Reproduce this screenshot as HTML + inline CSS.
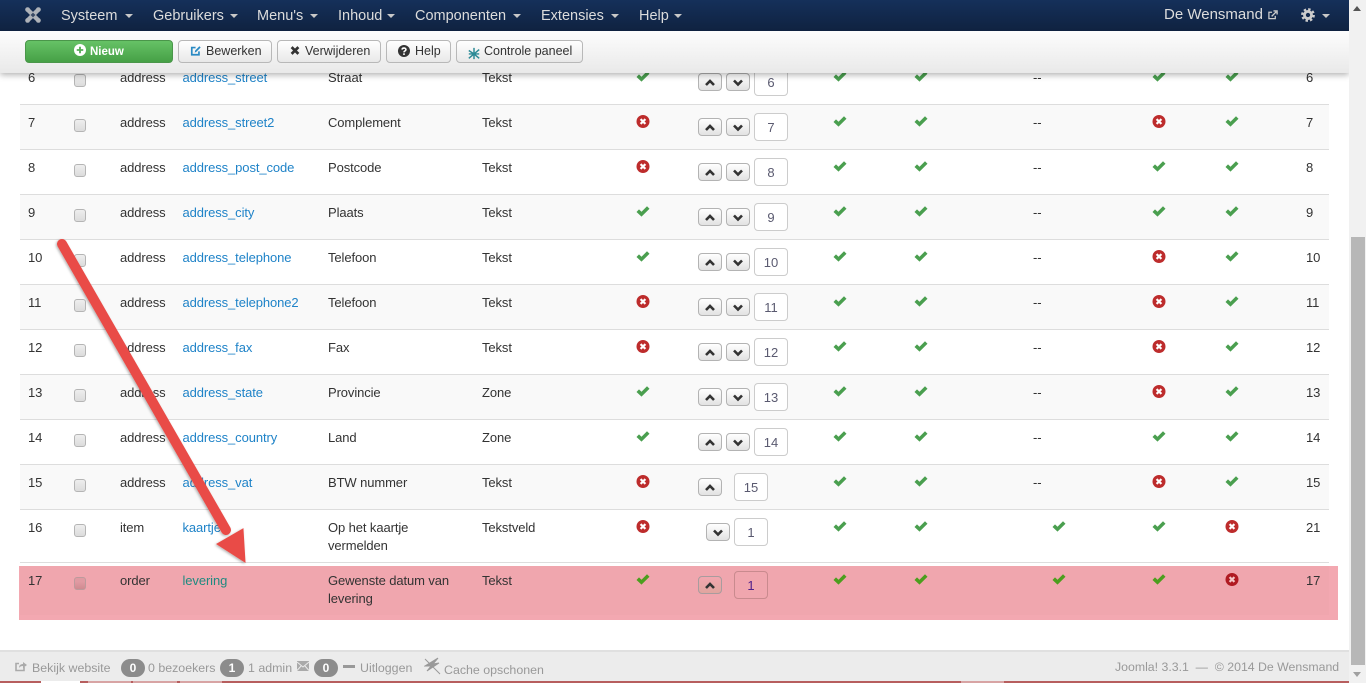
<!DOCTYPE html>
<html><head><meta charset="utf-8"><title>Velden</title>
<style>
html,body{margin:0;padding:0;width:1366px;height:683px;overflow:hidden;background:#fff;font-family:"Liberation Sans",Arial,sans-serif;font-size:13px;color:#333}
div,span,svg{position:absolute;box-sizing:border-box}
.r{left:20px;width:1309px;border-top:1px solid #ddd;height:45px;background:#fff}
.s{background:#f9f9f9}
.t{top:9px;line-height:18px;white-space:nowrap;color:#333;letter-spacing:-.1px}
.l{color:#1f83c8}
.n{left:8px}.a{left:100px}.b{left:162.5px}.c{left:308px;width:135px;white-space:normal}.d{left:462px}.e{left:1013px}.z{left:1286px}
.cb{left:54px;top:14px;width:12px;height:13px;border:1px solid #b5b5b5;border-radius:3px;background:linear-gradient(#eee,#dcdcdc)}
.i{width:14px;height:14px;top:10px}
.k1{left:616px}.k2{left:813px}.k3{left:894px}.k4{left:1032px}.k5{left:1132px}.k6{left:1205px}
.o{width:24px;height:18px;top:13px;border:1px solid #b3b3b3;border-radius:4px;background:linear-gradient(#fff,#e2e2e2)}
.o svg{left:5px;top:3px;width:12px;height:10px}
.u{left:678px}.w{left:706px}
.in{left:734px;top:8px;width:34px;height:28px;border:1px solid #ccc;border-radius:4px;background:#fff;text-align:center;font-size:13px;line-height:27px;color:#5a5a70}
.nav{left:0;top:0;width:1349px;height:31px;background:linear-gradient(#15305a,#0f2240);z-index:5}
.nv{top:7px;font-size:14.5px;line-height:18px;color:#dcdcdc;white-space:nowrap}
.cr{top:14px;width:0;height:0;border-left:4px solid transparent;border-right:4px solid transparent;border-top:4px solid #c8c8c8}
.sub{left:0;top:31px;width:1349px;height:42px;background:linear-gradient(#fdfdfd,#e9e9e9);box-shadow:0 2px 6px rgba(0,0,0,.3);z-index:4}
.btn{top:9px;height:23px;border:1px solid #b8b8b8;border-radius:4px;background:linear-gradient(#fff,#e8e8e8);font-size:12.5px;line-height:21px;white-space:nowrap;color:#333}
.btn span{top:0}
.ft{left:0;top:650px;width:1349px;height:31px;background:#ececec;border-top:2px solid #e0e0e0}
.f{font-size:12.4px;line-height:16px;color:#999;white-space:nowrap}
.bd{top:659px;height:18px;border-radius:9px;background:#8c8c8c;color:#fff;font-size:12px;font-weight:bold;line-height:18px;text-align:center}
.tab{top:681px;height:2px;background:#d8a4a4}
</style></head><body>
<svg width="0" height="0" style="left:0;top:0"><defs>
<g id="c"><path d="M0.5 7 L3 4.4 L5.5 6.8 L11 1.2 L13.5 3.8 L5.5 11.6 Z" fill="#4a9f4f"/></g>
<g id="x"><circle cx="7" cy="6.5" r="6.5" fill="#bd2c2c"/><path d="M4.6 4.1 L9.4 8.9 M9.4 4.1 L4.6 8.9" stroke="#fff" stroke-width="2.2"/></g>
<g id="g"><path d="M0.5 7 L3 4.4 L5.5 6.8 L11 1.2 L13.5 3.8 L5.5 11.6 Z" fill="#4c9e1e"/></g>
<g id="y"><circle cx="7" cy="6.5" r="6.5" fill="#b01a22"/><path d="M4.6 4.1 L9.4 8.9 M9.4 4.1 L4.6 8.9" stroke="#f3c8c8" stroke-width="2.2"/></g>
<path id="up" d="M2 8 L6 4 L10 8" fill="none" stroke="#333" stroke-width="2.6"/>
<path id="dn" d="M2 3.5 L6 7.5 L10 3.5" fill="none" stroke="#333" stroke-width="2.6"/>
</defs></svg>

<div class="r" style="top:59px"><div class="t n">6</div><div class="cb"></div><div class="t a">address</div><div class="t b l">address_street</div><div class="t c">Straat</div><div class="t d">Tekst</div><svg class="i k1"><use href="#c"/></svg><div class="o u"><svg><use href="#up"/></svg></div><div class="o w"><svg><use href="#dn"/></svg></div><div class="in">6</div><svg class="i k2"><use href="#c"/></svg><svg class="i k3"><use href="#c"/></svg><div class="t e">--</div><svg class="i k5"><use href="#c"/></svg><svg class="i k6"><use href="#c"/></svg><div class="t z">6</div></div>
<div class="r s" style="top:104px"><div class="t n">7</div><div class="cb"></div><div class="t a">address</div><div class="t b l">address_street2</div><div class="t c">Complement</div><div class="t d">Tekst</div><svg class="i k1"><use href="#x"/></svg><div class="o u"><svg><use href="#up"/></svg></div><div class="o w"><svg><use href="#dn"/></svg></div><div class="in">7</div><svg class="i k2"><use href="#c"/></svg><svg class="i k3"><use href="#c"/></svg><div class="t e">--</div><svg class="i k5"><use href="#x"/></svg><svg class="i k6"><use href="#c"/></svg><div class="t z">7</div></div>
<div class="r" style="top:149px"><div class="t n">8</div><div class="cb"></div><div class="t a">address</div><div class="t b l">address_post_code</div><div class="t c">Postcode</div><div class="t d">Tekst</div><svg class="i k1"><use href="#x"/></svg><div class="o u"><svg><use href="#up"/></svg></div><div class="o w"><svg><use href="#dn"/></svg></div><div class="in">8</div><svg class="i k2"><use href="#c"/></svg><svg class="i k3"><use href="#c"/></svg><div class="t e">--</div><svg class="i k5"><use href="#c"/></svg><svg class="i k6"><use href="#c"/></svg><div class="t z">8</div></div>
<div class="r s" style="top:194px"><div class="t n">9</div><div class="cb"></div><div class="t a">address</div><div class="t b l">address_city</div><div class="t c">Plaats</div><div class="t d">Tekst</div><svg class="i k1"><use href="#c"/></svg><div class="o u"><svg><use href="#up"/></svg></div><div class="o w"><svg><use href="#dn"/></svg></div><div class="in">9</div><svg class="i k2"><use href="#c"/></svg><svg class="i k3"><use href="#c"/></svg><div class="t e">--</div><svg class="i k5"><use href="#c"/></svg><svg class="i k6"><use href="#c"/></svg><div class="t z">9</div></div>
<div class="r" style="top:239px"><div class="t n">10</div><div class="cb"></div><div class="t a">address</div><div class="t b l">address_telephone</div><div class="t c">Telefoon</div><div class="t d">Tekst</div><svg class="i k1"><use href="#c"/></svg><div class="o u"><svg><use href="#up"/></svg></div><div class="o w"><svg><use href="#dn"/></svg></div><div class="in">10</div><svg class="i k2"><use href="#c"/></svg><svg class="i k3"><use href="#c"/></svg><div class="t e">--</div><svg class="i k5"><use href="#x"/></svg><svg class="i k6"><use href="#c"/></svg><div class="t z">10</div></div>
<div class="r s" style="top:284px"><div class="t n">11</div><div class="cb"></div><div class="t a">address</div><div class="t b l">address_telephone2</div><div class="t c">Telefoon</div><div class="t d">Tekst</div><svg class="i k1"><use href="#x"/></svg><div class="o u"><svg><use href="#up"/></svg></div><div class="o w"><svg><use href="#dn"/></svg></div><div class="in">11</div><svg class="i k2"><use href="#c"/></svg><svg class="i k3"><use href="#c"/></svg><div class="t e">--</div><svg class="i k5"><use href="#x"/></svg><svg class="i k6"><use href="#c"/></svg><div class="t z">11</div></div>
<div class="r" style="top:329px"><div class="t n">12</div><div class="cb"></div><div class="t a">address</div><div class="t b l">address_fax</div><div class="t c">Fax</div><div class="t d">Tekst</div><svg class="i k1"><use href="#x"/></svg><div class="o u"><svg><use href="#up"/></svg></div><div class="o w"><svg><use href="#dn"/></svg></div><div class="in">12</div><svg class="i k2"><use href="#c"/></svg><svg class="i k3"><use href="#c"/></svg><div class="t e">--</div><svg class="i k5"><use href="#x"/></svg><svg class="i k6"><use href="#c"/></svg><div class="t z">12</div></div>
<div class="r s" style="top:374px"><div class="t n">13</div><div class="cb"></div><div class="t a">address</div><div class="t b l">address_state</div><div class="t c">Provincie</div><div class="t d">Zone</div><svg class="i k1"><use href="#c"/></svg><div class="o u"><svg><use href="#up"/></svg></div><div class="o w"><svg><use href="#dn"/></svg></div><div class="in">13</div><svg class="i k2"><use href="#c"/></svg><svg class="i k3"><use href="#c"/></svg><div class="t e">--</div><svg class="i k5"><use href="#x"/></svg><svg class="i k6"><use href="#c"/></svg><div class="t z">13</div></div>
<div class="r" style="top:419px"><div class="t n">14</div><div class="cb"></div><div class="t a">address</div><div class="t b l">address_country</div><div class="t c">Land</div><div class="t d">Zone</div><svg class="i k1"><use href="#c"/></svg><div class="o u"><svg><use href="#up"/></svg></div><div class="o w"><svg><use href="#dn"/></svg></div><div class="in">14</div><svg class="i k2"><use href="#c"/></svg><svg class="i k3"><use href="#c"/></svg><div class="t e">--</div><svg class="i k5"><use href="#c"/></svg><svg class="i k6"><use href="#c"/></svg><div class="t z">14</div></div>
<div class="r s" style="top:464px"><div class="t n">15</div><div class="cb"></div><div class="t a">address</div><div class="t b l">address_vat</div><div class="t c">BTW nummer</div><div class="t d">Tekst</div><svg class="i k1"><use href="#x"/></svg><div class="o u"><svg><use href="#up"/></svg></div><div class="in" style="left:714px">15</div><svg class="i k2"><use href="#c"/></svg><svg class="i k3"><use href="#c"/></svg><div class="t e">--</div><svg class="i k5"><use href="#x"/></svg><svg class="i k6"><use href="#c"/></svg><div class="t z">15</div></div>
<div class="r" style="top:509px;height:53px"><div class="t n">16</div><div class="cb"></div><div class="t a">item</div><div class="t b l">kaartje</div><div class="t c">Op het kaartje vermelden</div><div class="t d">Tekstveld</div><svg class="i k1"><use href="#x"/></svg><div class="o" style="left:686px"><svg><use href="#dn"/></svg></div><div class="in" style="left:714px">1</div><svg class="i k2"><use href="#c"/></svg><svg class="i k3"><use href="#c"/></svg><svg class="i k4"><use href="#c"/></svg><svg class="i k5"><use href="#c"/></svg><svg class="i k6"><use href="#x"/></svg><div class="t z">21</div></div>
<div class="r" style="top:562px;height:4px;background:#fff;border-top:1px solid #ddd"></div>
<div style="left:19px;top:566px;width:1319px;height:54px;background:#f3a8b1"></div>
<div style="left:20px;top:566px;width:1309px;height:49px;background:#f0a6ae"></div>
<div class="r" style="top:563px;height:53px;background:transparent;border:0">
<div class="t n">17</div><div class="cb" style="background:linear-gradient(#e09aa2 35%,#cf8a90);border-color:#bd9a9c"></div><div class="t a">order</div><div class="t b" style="color:#1f8a80">levering</div><div class="t c">Gewenste datum van levering</div><div class="t d">Tekst</div><svg class="i k1"><use href="#g"/></svg><div class="o u" style="background:linear-gradient(#f2a7b0,#e0a59f);border-color:#a89c9e"><svg><use href="#up"/></svg></div><div class="in" style="left:714px;background:transparent;border-color:#c98a8e;color:#50208a">1</div><svg class="i k2"><use href="#g"/></svg><svg class="i k3"><use href="#g"/></svg><svg class="i k4"><use href="#g"/></svg><svg class="i k5"><use href="#g"/></svg><svg class="i k6"><use href="#y"/></svg><div class="t z">17</div></div>

<div class="nav">
<svg style="left:25px;top:7px" width="16" height="16" viewBox="0 0 16 16"><path d="M3 3 L13 13 M13 3 L3 13" stroke="#aeb2b8" stroke-width="4.4"/><circle cx="2.6" cy="2.6" r="2.4" fill="#aeb2b8"/><circle cx="13.4" cy="2.6" r="2.4" fill="#aeb2b8"/><circle cx="2.6" cy="13.4" r="2.4" fill="#aeb2b8"/><circle cx="13.4" cy="13.4" r="2.4" fill="#aeb2b8"/><path d="M8 5.6 L10.4 8 L8 10.4 L5.6 8 Z" fill="#3a4a64"/></svg>
<div class="nv" style="left:61px">Systeem</div><div class="cr" style="left:125px"></div>
<div class="nv" style="left:153px">Gebruikers</div><div class="cr" style="left:230px"></div>
<div class="nv" style="left:257px">Menu's</div><div class="cr" style="left:310px"></div>
<div class="nv" style="left:338px">Inhoud</div><div class="cr" style="left:387px"></div>
<div class="nv" style="left:415px">Componenten</div><div class="cr" style="left:513px"></div>
<div class="nv" style="left:541px">Extensies</div><div class="cr" style="left:611px"></div>
<div class="nv" style="left:639px">Help</div><div class="cr" style="left:674px"></div>
<div class="nv" style="left:1164px;font-size:15px;top:6px">De Wensmand</div>
<svg style="left:1268px;top:10px" width="10" height="10" viewBox="0 0 11 11"><path d="M8 6.5 V9.5 H1 V2.5 H4.5" fill="none" stroke="#ccc" stroke-width="1.4"/><path d="M4 7 L9 2 M6 1 H10 V5" fill="none" stroke="#ccc" stroke-width="1.5"/></svg>
<svg style="left:1301px;top:8px" width="14" height="14" viewBox="0 0 13 13"><circle cx="6.5" cy="6.5" r="5.2" fill="none" stroke="#ccc" stroke-width="2.4" stroke-dasharray="2.2 1.88"/><circle cx="6.5" cy="6.5" r="3.3" fill="none" stroke="#ccc" stroke-width="2.6"/></svg>
<div class="cr" style="left:1322px"></div>
</div>

<div class="sub">
<div class="btn" style="left:25px;width:148px;background:linear-gradient(#66c266,#46a046);border-color:#4a964a;color:#fff;font-weight:bold;font-size:11.5px">
<svg style="left:48px;top:3px" width="12" height="12" viewBox="0 0 13 13"><circle cx="6.5" cy="6.5" r="6.5" fill="#fff"/><path d="M6.5 3 V10 M3 6.5 H10" stroke="#55ae55" stroke-width="2"/></svg><span style="left:64px;top:1px">Nieuw</span></div>
<div class="btn" style="left:178px;width:94px"><svg style="left:11px;top:4px" width="12" height="11" viewBox="0 0 13 13"><path d="M10 7.5 V11.5 H1.5 V3 H6" fill="none" stroke="#2a8ac4" stroke-width="2"/><path d="M5 9 L5.5 6.5 L10.5 1.5 L12 3 L7 8 Z" fill="#2a8ac4"/></svg><span style="left:27px">Bewerken</span></div>
<div class="btn" style="left:277px;width:104px"><svg style="left:11px;top:4px" width="12" height="11" viewBox="0 0 12 13"><path d="M2 2.5 L10 10.5 M10 2.5 L2 10.5" stroke="#333" stroke-width="3.2"/></svg><span style="left:27px">Verwijderen</span></div>
<div class="btn" style="left:386px;width:65px"><svg style="left:11px;top:4px" width="12" height="12" viewBox="0 0 13 13"><circle cx="6.5" cy="6.5" r="6.5" fill="#333"/><path d="M4.4 5 C4.6 2.8 8.6 2.8 8.6 5 C8.6 6.4 6.5 6.4 6.5 8" fill="none" stroke="#fff" stroke-width="1.7"/><rect x="5.6" y="9" width="1.8" height="1.8" fill="#fff"/></svg><span style="left:28px">Help</span></div>
<div class="btn" style="left:456px;width:127px"><svg style="left:10px;top:6px" width="14" height="13" viewBox="0 0 14 15"><path d="M7 1 V14 M1 4 L7 8 L13 3 M1 13 L7 8 L13 13 M1 8 H13" fill="none" stroke="#2c8a96" stroke-width="1.7"/></svg><span style="left:27px">Controle paneel</span></div>
</div>

<div class="ft"></div>
<svg style="left:15px;top:660px" width="12" height="12" viewBox="0 0 12 12"><path d="M9 7 V10.5 H1 V3.5 H4" fill="none" stroke="#aaa" stroke-width="1.6"/><path d="M4 8 C4 5 6 4 8 4 V2 L12 5 L8 8 V6 C6 6 5 6.5 4 8Z" fill="#aaa"/></svg>
<div class="f" style="left:32px;top:660px">Bekijk website</div>
<div class="bd" style="left:121px;width:24px">0</div><div class="f" style="left:148px;top:660px">0 bezoekers</div>
<div class="bd" style="left:220px;width:24px">1</div><div class="f" style="left:248px;top:660px">1 admin</div>
<svg style="left:297px;top:661px" width="12" height="10" viewBox="0 0 12 10"><rect width="12" height="10" fill="#aaa"/><path d="M0 1 L6 6 L12 1 M0 9.5 L4.5 4.5 M12 9.5 L7.5 4.5" fill="none" stroke="#ececec" stroke-width="1"/></svg>
<div class="bd" style="left:314px;width:24px">0</div>
<div style="left:343px;top:665px;width:12px;height:3px;background:#999"></div>
<div class="f" style="left:360px;top:660px">Uitloggen</div>
<svg style="left:424px;top:657px" width="18" height="19" viewBox="0 0 18 19"><path d="M14 1 L9 7 L15 6 L3 14 L7 9 L1 9 Z M1 2 L16 17" fill="#999" stroke="#999" stroke-width="1"/></svg>
<div class="f" style="left:444px;top:662px">Cache opschonen</div>
<div class="f" style="left:1115px;top:659px;font-size:12.3px">Joomla! 3.3.1 &nbsp;— &nbsp;© 2014 De Wensmand</div>
<div style="left:0;top:681px;width:1349px;height:2px;background:#b75e5e"></div>
<div class="tab" style="left:41px;width:39px;background:#fff"></div><div class="tab" style="left:88px;width:43px"></div><div class="tab" style="left:133px;width:44px"></div><div class="tab" style="left:180px;width:42px"></div><div class="tab" style="left:961px;width:43px"></div>

<div style="left:1349px;top:0;width:17px;height:683px;background:#f1f1f1;z-index:6">
<div style="left:2px;top:237px;width:14px;height:428px;background:#b7b7b7"></div>
<div style="left:4px;top:6px;width:0;height:0;border-left:4px solid transparent;border-right:4px solid transparent;border-bottom:5px solid #555"></div>
<div style="left:4px;top:672px;width:0;height:0;border-left:4px solid transparent;border-right:4px solid transparent;border-top:5px solid #a0a0a0"></div>
</div>

<svg style="left:0;top:0;z-index:7" width="1349" height="683" viewBox="0 0 1349 683">
<defs><filter id="sh" x="-20%" y="-20%" width="140%" height="140%"><feDropShadow dx="-1" dy="1" stdDeviation="1.2" flood-color="#000" flood-opacity=".3"/></filter></defs>
<g filter="url(#sh)"><path d="M62 244 L226 530" stroke="#e94c46" stroke-width="10" stroke-linecap="round"/><path d="M243 529 L245 562 L217 544 Z" fill="#e94c46" stroke="#e94c46" stroke-width="1"/></g>
</svg>
</body></html>
